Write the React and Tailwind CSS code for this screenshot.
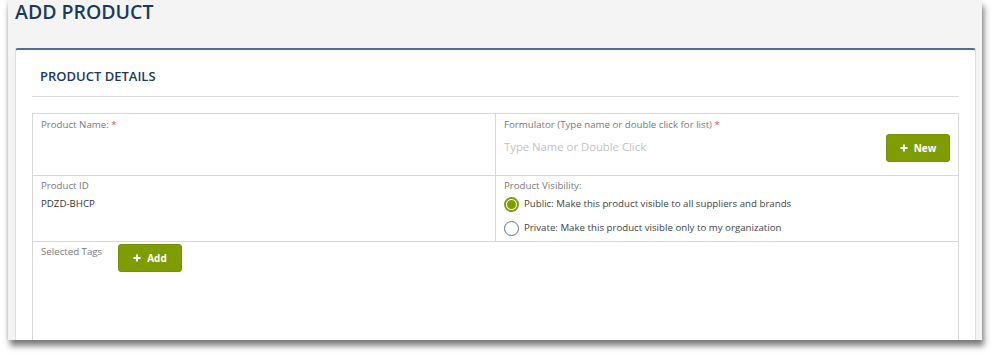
import React from "react";

function Plus() {
  return (
    <svg width="8" height="8" viewBox="0 0 10 10" className="mr-[6px]">
      <path d="M5 0.5v9M0.5 5h9" stroke="white" strokeWidth="2.6" strokeLinecap="butt" />
    </svg>
  );
}

function GreenButton({ children, className = "" }) {
  return (
    <button
      className={
        "flex items-center justify-center h-[28px] w-[64px] rounded-[3px] bg-[#7f9c02] border border-[#759000] text-white text-[10px] font-bold " +
        className
      }
    >
      <Plus />
      {children}
    </button>
  );
}

export default function App() {
  return (
    <div
      className="w-[993px] h-[356px] bg-white overflow-hidden"
      style={{ fontFamily: "'Open Sans', 'Noto Sans', sans-serif" }}
    >
      <div className="ml-[8px] w-[974px] h-[340px] bg-[#f4f4f4] overflow-hidden shadow-[2px_6px_6px_rgba(0,0,0,0.5),-1px_0_3px_rgba(0,0,0,0.12)]">
        <div className="h-[48px] pl-[7px] pt-[1px]">
          <h1 className="text-[19.5px] leading-[22px] font-semibold text-[#1c3b5c]">
            ADD PRODUCT
          </h1>
        </div>
        <div className="ml-[7px] w-[961px] h-[300px] bg-white border-t-2 border-[#4e6e92] border-x border-x-[#dedede] rounded-t-[3px] px-[16px]">
          <div className="pl-[8px] pt-[18px] pb-[12px] text-[13px] font-semibold text-[#1c3b5c] leading-[16px]">
            PRODUCT DETAILS
          </div>
          <div className="h-px bg-[#dcdcdc]" />
          <div className="mt-[16px] border border-[#d8d8d8] text-[9.7px] leading-[16px] text-[#7a7a7a]">
            <div className="grid grid-cols-[463px_1fr] border-b border-[#d8d8d8] h-[62px]">
              <div className="border-r border-[#d8d8d8] px-[8px] pt-[3px]">
                Product Name: <span className="text-[#d9534f]">*</span>
              </div>
              <div className="px-[8px] pt-[3px] flex">
                <div className="flex-1">
                  <div>
                    Formulator (Type name or double click for list){" "}
                    <span className="text-[#d9534f]">*</span>
                  </div>
                  <div className="mt-[6px] text-[11.3px] text-[#c2c2c2]">
                    Type Name or Double Click
                  </div>
                </div>
                <GreenButton className="mt-[17px]">New</GreenButton>
              </div>
            </div>
            <div className="grid grid-cols-[463px_1fr] border-b border-[#d8d8d8] h-[66px]">
              <div className="border-r border-[#d8d8d8] px-[8px] pt-[2px]">
                <div>Product ID</div>
                <div className="mt-[2px] text-[#333]">PDZD-BHCP</div>
              </div>
              <div className="px-[8px] pt-[2px]">
                <div>Product Visibility:</div>
                <div className="mt-[2px] flex items-center text-[#444]">
                  <span className="w-[15px] h-[15px] rounded-full border-2 border-[#7f9c02] flex items-center justify-center mr-[5px]">
                    <span className="w-[9px] h-[9px] rounded-full bg-[#7f9c02]" />
                  </span>
                  Public: Make this product visible to all suppliers and brands
                </div>
                <div className="mt-[8px] flex items-center text-[#444]">
                  <span className="w-[15px] h-[15px] rounded-full border-[1.5px] border-[#5a7490] mr-[5px]" />
                  Private: Make this product visible only to my organization
                </div>
              </div>
            </div>
            <div className="h-[120px] px-[8px] pt-[2px] flex items-start">
              <div className="w-[77px]">Selected Tags</div>
              <GreenButton>Add</GreenButton>
            </div>
          </div>
        </div>
      </div>
    </div>
  );
}
